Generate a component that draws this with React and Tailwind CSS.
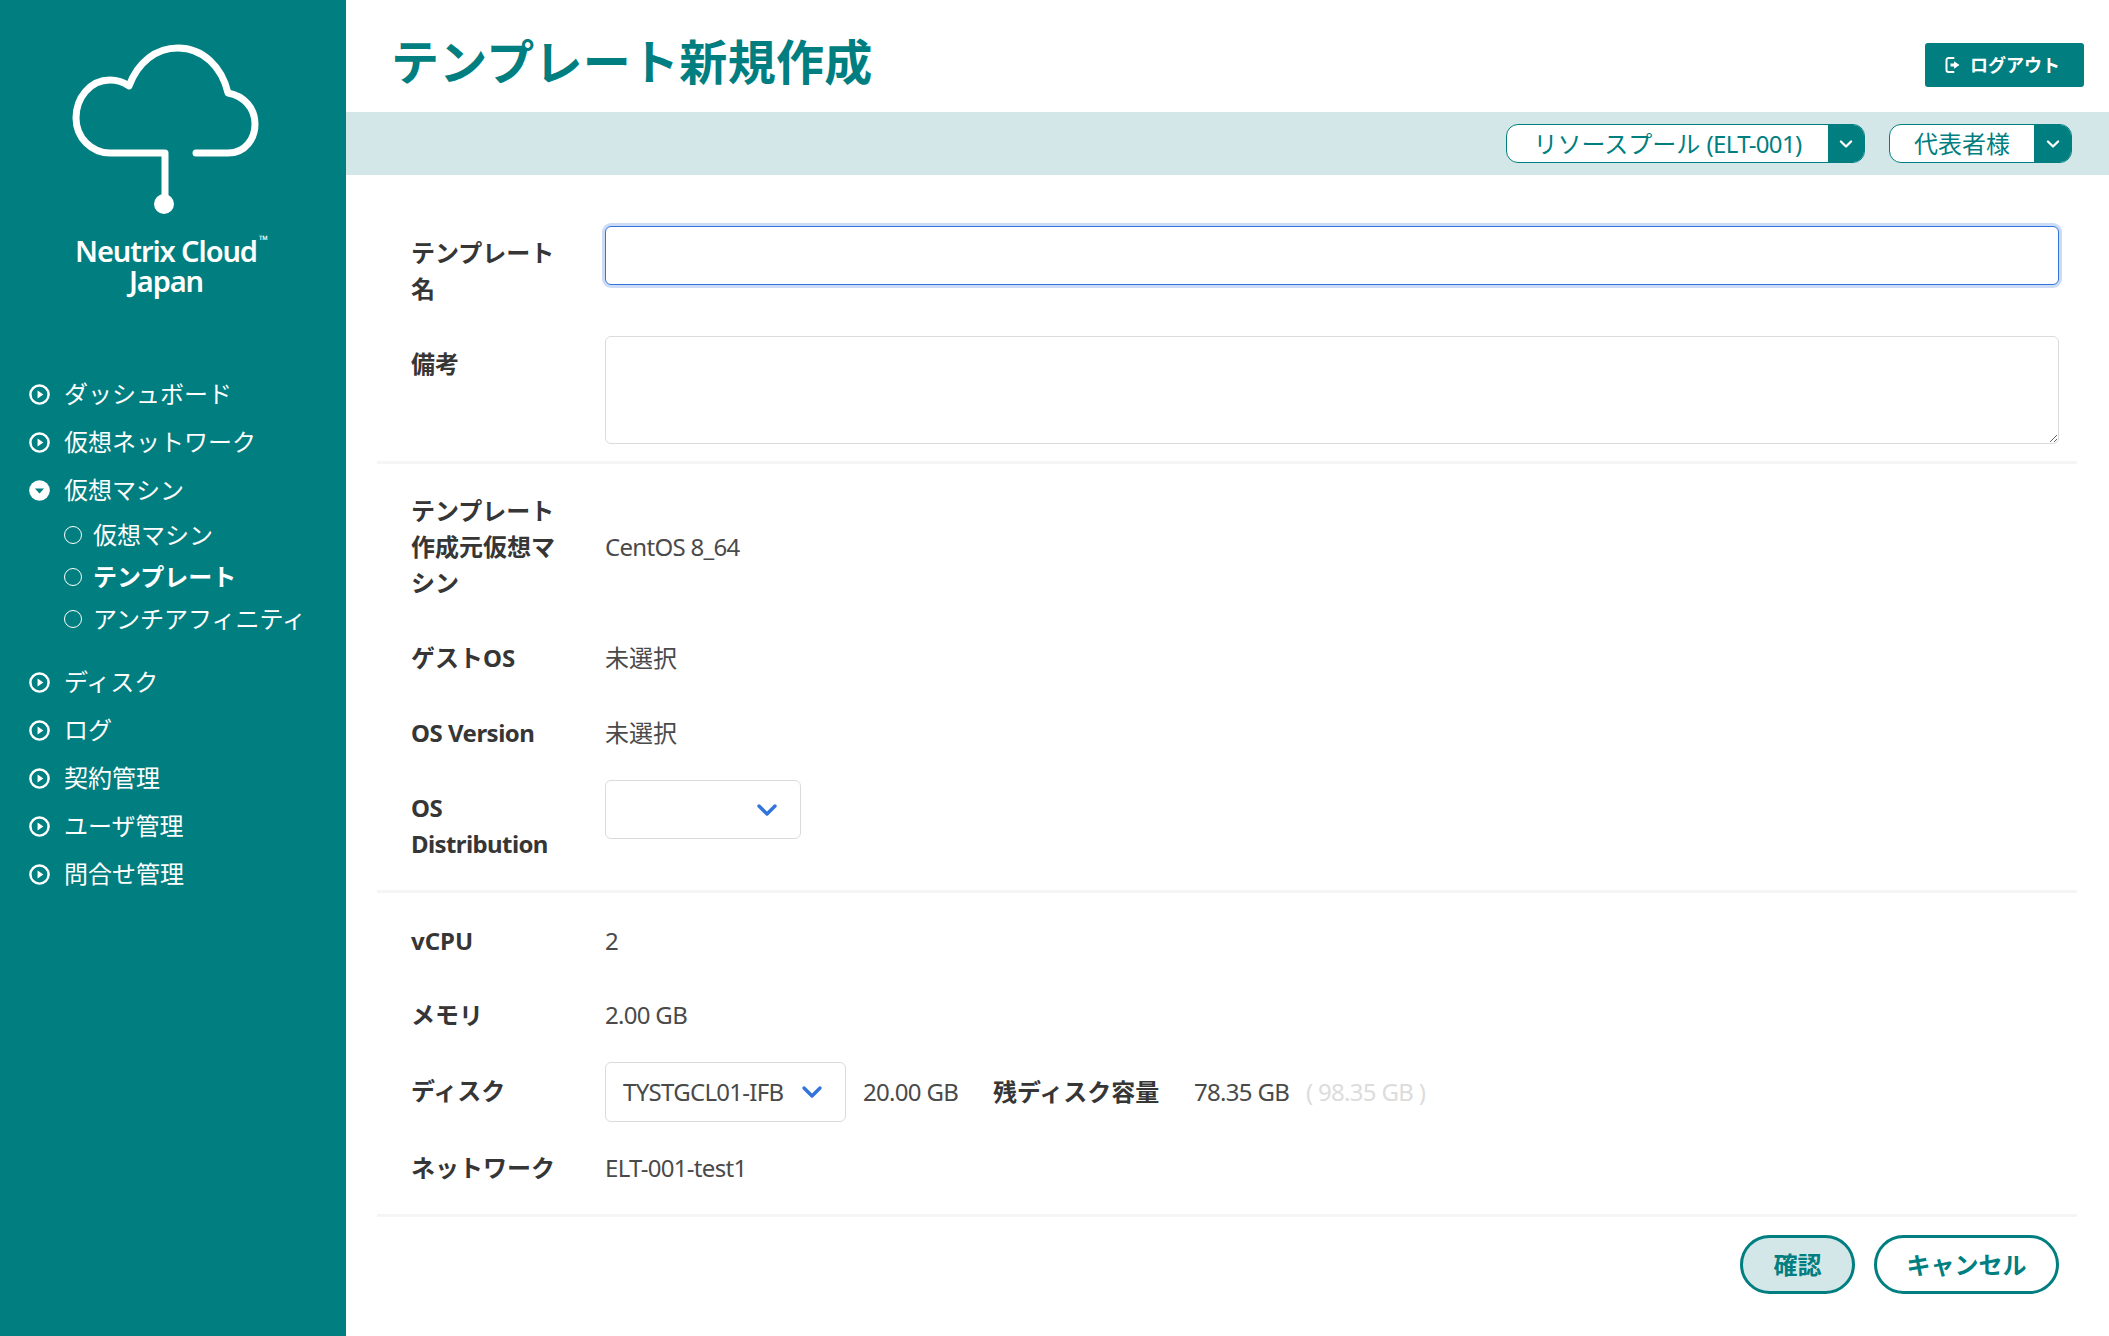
const font = { fontFamily: '"Noto Sans", "Noto Sans CJK JP", sans-serif' }

function PlayCircle() {
  return (
    <svg width="21" height="21" viewBox="0 0 24 24" className="shrink-0">
      <circle cx="12" cy="12" r="10.4" fill="none" stroke="#fff" strokeWidth="2.8" />
      <path d="M9.8 7.4 16.4 12l-6.6 4.6z" fill="#fff" />
    </svg>
  )
}

function CaretCircle() {
  return (
    <svg width="21" height="21" viewBox="0 0 24 24" className="shrink-0">
      <circle cx="12" cy="12" r="11.8" fill="#fff" />
      <path d="M6.8 9.8h10.4L12 15.4z" fill="#007e80" />
    </svg>
  )
}

function Chevron({ color = '#3273dc', size = 22, width = 3.4 }) {
  return (
    <svg width={size} height={size} viewBox="0 0 22 22" className="shrink-0">
      <path d="M3 7l8 8 8-8" fill="none" stroke={color} strokeWidth={width} strokeLinecap="round" strokeLinejoin="round" />
    </svg>
  )
}

function Logo() {
  return (
    <svg width="195" height="180" viewBox="70 40 195 180" className="block">
      <path
        d="M196 153H228C246 153 255 138 255 124C255 108 244 96 228 93C222 67 203 48 178 48C156 48 138 62 129 86C122 81 116 80 110 80C90 80 76 98 76 118C76 138 92 153 110 153H165V200"
        fill="none"
        stroke="#fff"
        strokeWidth="7"
        strokeLinecap="round"
        strokeLinejoin="round"
      />
      <circle cx="164" cy="204" r="10" fill="#fff" />
    </svg>
  )
}

function MenuItem({ label, open = false }) {
  return (
    <div className="flex items-center h-[48px] pl-[29px] gap-[14px]">
      {open ? <CaretCircle /> : <PlayCircle />}
      <span className="text-[24px] leading-[36px]">{label}</span>
    </div>
  )
}

function SubItem({ label, active = false }) {
  return (
    <div className="flex items-center h-[42px] pl-[64px] gap-[11px]">
      <span className="w-[18px] h-[18px] rounded-full border-[1.5px] border-white shrink-0" />
      <span className={`text-[24px] leading-[36px] ${active ? 'font-bold' : ''}`}>{label}</span>
    </div>
  )
}

function Sidebar() {
  return (
    <aside className="w-[346px] shrink-0 bg-[#007e80] text-white flex flex-col">
      <div className="pl-[70px] pt-[40px]">
        <Logo />
      </div>
      <div className="mt-[16px] ml-[74px] w-[184px] text-center text-[29px] leading-[30px] font-semibold tracking-[-1.1px] whitespace-nowrap relative">
        <div>Neutrix Cloud</div>
        <div>Japan</div>
        <span className="absolute left-[185px] top-[-3px] text-[12px] leading-[14px] tracking-normal">™</span>
      </div>
      <nav className="mt-[74px] flex flex-col">
        <MenuItem label="ダッシュボード" />
        <MenuItem label="仮想ネットワーク" />
        <MenuItem label="仮想マシン" open />
        <div className="mb-[18px]">
          <SubItem label="仮想マシン" />
          <SubItem label="テンプレート" active />
          <SubItem label="アンチアフィニティ" />
        </div>
        <MenuItem label="ディスク" />
        <MenuItem label="ログ" />
        <MenuItem label="契約管理" />
        <MenuItem label="ユーザ管理" />
        <MenuItem label="問合せ管理" />
      </nav>
    </aside>
  )
}

function TopSelect({ children, width, arrowWidth }) {
  return (
    <div className={`flex h-[39px] ${width} rounded-[12px] border-[1.5px] border-[#007e80] bg-white overflow-hidden`}>
      <div className="flex-1 text-center text-[24px] leading-[37px] text-[#007e80] whitespace-nowrap">{children}</div>
      <div className={`${arrowWidth} bg-[#007e80] flex items-center justify-center`}>
        <Chevron color="#fff" size={14} width={3.6} />
      </div>
    </div>
  )
}

function Row({ label, children, className = '', labelClass = '', textClass = '', align = '' }) {
  return (
    <div className={`flex pl-[34px] pr-[18px] ${align} ${className}`}>
      <div className={`w-[194px] shrink-0 ${labelClass}`}>
        <div className={`w-[160px] text-[24px] leading-[36px] font-bold text-[#363636] ${textClass}`}>{label}</div>
      </div>
      <div className="flex-1 min-w-0 text-[24px] leading-[36px] text-[#4a4a4a]">{children}</div>
    </div>
  )
}

function Latin({ children, className = '' }) {
  return <span className={`tracking-[-0.7px] whitespace-nowrap ${className}`}>{children}</span>
}

function Divider() {
  return <div className="h-[3px] bg-[#f5f5f5]" />
}

export default function App() {
  return (
    <div className="flex min-h-screen h-[1336px] bg-white" style={font}>
      <Sidebar />
      <main className="flex-1 min-w-0">
        <header className="h-[112px] flex items-start justify-between pl-[45px] pr-[25px]">
          <h1 className="mt-[26px] text-[48px] leading-[72px] font-bold tracking-[0.3px] text-[#007e80] whitespace-nowrap">テンプレート新規作成</h1>
          <button className="mt-[43px] w-[159px] h-[44px] rounded-[3px] bg-[#007e80] text-white flex items-center pl-[20px] gap-[10px]">
            <svg width="15" height="18" viewBox="0 0 15 18" className="shrink-0">
              <path d="M8.5 2H3.5A2 2 0 0 0 1.5 4V14A2 2 0 0 0 3.5 16H8.5" fill="none" stroke="#fff" strokeWidth="2" strokeLinecap="round" />
              <path d="M9 5.2 14.5 9 9 12.8V10.5H5.5V7.5H9z" fill="#fff" />
            </svg>
            <span className="text-[18px] leading-[27px] font-bold">ログアウト</span>
          </button>
        </header>

        <div className="h-[63px] bg-[#d4e7e8] flex items-center justify-end pr-[37px] gap-[24px]">
          <TopSelect width="w-[359px]" arrowWidth="w-[36px]">
            リソースプール <Latin>(ELT-001)</Latin>
          </TopSelect>
          <TopSelect width="w-[183px]" arrowWidth="w-[37px]">代表者様</TopSelect>
        </div>

        <form className="ml-[31px] mr-[32px] pt-[51px]">
          <Row label="テンプレート名" labelClass="pt-[9px]" className="mb-[29px]">
            <input className="block w-full h-[59px] rounded-[6px] border-[1.5px] border-[#3273dc] bg-white outline-none shadow-[0_0_0_3px_rgba(50,115,220,0.25)]" />
          </Row>
          <Row label="備考" labelClass="pt-[10px]" className="mb-[17px]">
            <textarea className="block w-full h-[108px] rounded-[6px] border-[1.5px] border-[#dbdbdb] bg-white outline-none resize-y" />
          </Row>
          <Divider />

          <Row label="テンプレート作成元仮想マシン" className="pt-[29px] mb-[39px]" align="items-center">
            <Latin>CentOS 8_64</Latin>
          </Row>
          <Row label="ゲストOS" className="mb-[39px]">未選択</Row>
          <Row label="OS Version" textClass="tracking-[-0.5px]" className="mb-[29px]">未選択</Row>
          <Row label="OS Distribution" textClass="tracking-[-0.6px]" labelClass="pt-[10px]" className="mb-[28px]">
            <div className="w-[196px] h-[59px] rounded-[6px] border-[1.5px] border-[#dbdbdb] flex items-center justify-end pr-[22px]">
              <Chevron />
            </div>
          </Row>
          <Divider />

          <Row label="vCPU" className="pt-[30px] mb-[38px]">2</Row>
          <Row label="メモリ" className="mb-[29px]"><Latin>2.00 GB</Latin></Row>
          <Row label="ディスク" labelClass="-mt-[3px]" className="mb-[28px]" align="items-center">
            <div className="flex items-center">
              <div className="w-[241px] h-[60px] rounded-[6px] border-[1.5px] border-[#dbdbdb] flex items-center justify-between pl-[17px] pr-[22px]">
                <Latin>TYSTGCL01-IFB</Latin>
                <Chevron />
              </div>
              <Latin className="ml-[17px] w-[130px]">20.00 GB</Latin>
              <span className="font-bold text-[#363636] w-[201px] whitespace-nowrap">残ディスク容量</span>
              <Latin className="w-[112px]">78.35 GB</Latin>
              <Latin className="text-[#dcdcdc]">( 98.35 GB )</Latin>
            </div>
          </Row>
          <Row label="ネットワーク" className="mb-[28px]"><Latin>ELT-001-test1</Latin></Row>
          <Divider />

          <div className="mt-[18px] pr-[18px] flex justify-end gap-[19px]">
            <button type="button" className="w-[115px] h-[59px] rounded-full border-[3px] border-[#007e80] bg-[#d4e7e8] text-[24px] font-bold text-[#007e80]">確認</button>
            <button type="button" className="w-[185px] h-[59px] rounded-full border-[3px] border-[#007e80] bg-white text-[24px] font-bold text-[#007e80]">キャンセル</button>
          </div>
        </form>
      </main>
    </div>
  )
}
